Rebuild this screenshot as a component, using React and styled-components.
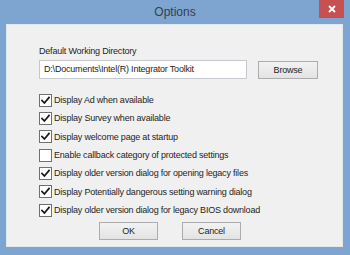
import React from "react";
import styled, { createGlobalStyle } from "styled-components";

const GlobalStyle = createGlobalStyle`
  html, body {
    margin: 0;
    padding: 0;
    background: #7ea5cf;
  }
  * {
    box-sizing: border-box;
  }
`;

const options = [
  { label: "Display Ad when available", checked: true },
  { label: "Display Survey when available", checked: true },
  { label: "Display welcome page at startup", checked: true },
  { label: "Enable callback category of protected settings", checked: false },
  { label: "Display older version dialog for opening legacy files", checked: true },
  { label: "Display Potentially dangerous setting warning dialog", checked: true },
  { label: "Display older version dialog for legacy BIOS download", checked: true },
];

function CheckMark() {
  return (
    <svg width="9" height="9" viewBox="0 0 9 9">
      <path
        d="M1 4.6 L3.4 7 L8 1.6"
        fill="none"
        stroke="#1a1a1a"
        strokeWidth="1.8"
        strokeLinecap="square"
      />
    </svg>
  );
}

function App() {
  return (
    <>
      <GlobalStyle />
      <Window>
        <TitleBar>
          <Title>Options</Title>
          <CloseButton>
            <svg width="8" height="8" viewBox="0 0 8 8">
              <path d="M1 1 L7 7 M7 1 L1 7" stroke="#fff" strokeWidth="1.8" />
            </svg>
          </CloseButton>
        </TitleBar>
        <Client>
          <Label>Default Working Directory</Label>
          <DirRow>
            <TextField>D:\Documents\Intel(R) Integrator Toolkit</TextField>
            <Button $width={60}>Browse</Button>
          </DirRow>
          <CheckList>
            {options.map((o) => (
              <CheckRow key={o.label}>
                <Box>{o.checked && <CheckMark />}</Box>
                <span>{o.label}</span>
              </CheckRow>
            ))}
          </CheckList>
          <ButtonRow>
            <Button $width={59}>OK</Button>
            <Button $width={59}>Cancel</Button>
          </ButtonRow>
        </Client>
      </Window>
    </>
  );
}

const Window = styled.div`
  width: 350px;
  height: 255px;
  background: #7ea5cf;
  display: flex;
  flex-direction: column;
  padding: 0 7px 8px 6px;
  font-family: "Liberation Sans", Arial, sans-serif;
  font-size: 9px;
  letter-spacing: -0.2px;
  color: #1e1e1e;
`;

const TitleBar = styled.div`
  height: 24px;
  position: relative;
  display: flex;
  align-items: center;
  justify-content: center;
`;

const Title = styled.div`
  font-family: "Liberation Sans", Arial, sans-serif;
  font-size: 12px;
  letter-spacing: 0;
  color: #34404f;
  margin-top: -1px;
  margin-left: 1px;
`;

const CloseButton = styled.div`
  position: absolute;
  top: 0;
  right: -1px;
  width: 25px;
  height: 18px;
  background: #c75050;
  display: flex;
  align-items: center;
  justify-content: center;
`;

const Client = styled.div`
  flex: 1;
  background: #f0f0f0;
  border: 1px solid #dfe7ef;
  padding: 18px 0 0 32px;
  display: flex;
  flex-direction: column;
`;

const Label = styled.div`
  height: 16px;
  line-height: 16px;
`;

const DirRow = styled.div`
  display: flex;
  align-items: center;
  gap: 11px;
  margin-top: 1px;
`;

const TextField = styled.div`
  width: 208px;
  height: 19px;
  background: #fff;
  border: 1px solid #c5c8cf;
  line-height: 17px;
  padding-left: 4px;
  white-space: nowrap;
  overflow: hidden;
`;

const Button = styled.div`
  width: ${(p) => p.$width}px;
  height: 18px;
  border: 1px solid #acacac;
  background: linear-gradient(#f2f2f2, #e3e3e3);
  display: flex;
  align-items: center;
  justify-content: center;
`;

const CheckList = styled.div`
  display: flex;
  flex-direction: column;
  margin-top: 12px;
`;

const CheckRow = styled.div`
  height: 18.33px;
  display: flex;
  align-items: center;
  gap: 2px;
  white-space: nowrap;
`;

const Box = styled.div`
  width: 13px;
  height: 13px;
  border: 1px solid #707070;
  background: #fff;
  display: flex;
  align-items: center;
  justify-content: center;
  flex-shrink: 0;
`;

const ButtonRow = styled.div`
  display: flex;
  gap: 24px;
  margin-top: 3px;
  margin-left: 60px;
`;

export default App;
